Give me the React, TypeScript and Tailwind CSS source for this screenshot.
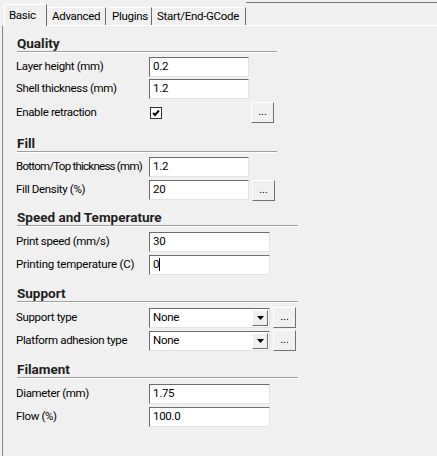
import React from 'react';

const font = { fontFamily: 'Roboto, "Noto Sans", sans-serif' };

function TextBox({ value, w, cursor }: { value: string; w: string; cursor?: boolean }) {
	return (
		<div
			className={`${w} h-[20px] bg-white border border-t-[#6d6d6d] border-l-[#6d6d6d] border-r-[#e3e3e3] border-b-[#e3e3e3] flex items-center pl-[3px] text-[11.5px] tracking-[-0.3px] text-black whitespace-nowrap`}
		>
			{value}
			{cursor && <span className="w-px h-[13px] bg-black" />}
		</div>
	);
}

function DotsButton() {
	return (
		<div className="w-[23px] h-[21px] bg-[#f0f0f0] border border-t-[#ffffff] border-l-[#ffffff] border-r-[#707070] border-b-[#707070] flex items-center justify-center text-[11px] leading-none text-black pb-[2px]">
			...
		</div>
	);
}

function Select({ value }: { value: string }) {
	return (
		<div className="w-[121px] h-[20px] bg-white border border-t-[#6d6d6d] border-l-[#6d6d6d] border-r-[#e3e3e3] border-b-[#e3e3e3] flex items-center text-[11.5px] tracking-[-0.3px] text-black">
			<span className="flex-1 pl-[3px]">{value}</span>
			<div className="w-[16px] h-[16px] mr-px bg-[#f0f0f0] border border-t-[#ffffff] border-l-[#ffffff] border-r-[#707070] border-b-[#707070] flex items-center justify-center">
				<svg width="7" height="4" viewBox="0 0 7 4">
					<path d="M0 0h7L3.5 4z" fill="#000" />
				</svg>
			</div>
		</div>
	);
}

function Checkbox() {
	return (
		<div className="w-[12px] h-[12px] bg-white border border-[#333] flex items-center justify-center ml-[1px]">
			<svg width="8" height="8" viewBox="0 0 8 8">
				<path d="M1 4l2 2L7 1.5" stroke="#000" strokeWidth="1.9" fill="none" />
			</svg>
		</div>
	);
}

function Section({ title, lineW, top, children }: { title: string; lineW: string; top: string; children: React.ReactNode }) {
	return (
		<div className={`${top} flex flex-col`}>
			<div className="pl-[14px] text-[13.5px] font-bold leading-[16px] text-[#1e1e1e] whitespace-nowrap">{title}</div>
			<div className={`${lineW} ml-[14px] border-t border-t-[#a0a0a0] border-b border-b-white`} />
			<div className="mt-[3px] flex flex-col">{children}</div>
		</div>
	);
}

function Row({
	label,
	h = 'h-[22px]',
	track = 'tracking-[-0.35px]',
	children,
}: {
	label: string;
	h?: string;
	track?: string;
	children: React.ReactNode;
}) {
	return (
		<div className={`${h} flex items-center`}>
			<div className={`w-[146px] pl-[13px] text-[11.5px] ${track} text-black whitespace-nowrap`}>{label}</div>
			<div className="flex items-center gap-[3px]">{children}</div>
		</div>
	);
}

export default function App() {
	return (
		<div className="w-[437px] h-[456px] bg-[#f0f0f0] overflow-hidden flex flex-col" style={font}>
			<div className="h-[25px] flex items-end pl-[4px] text-[11.5px] tracking-[-0.3px] text-black whitespace-nowrap">
				<div className="h-[22px] w-[43px] pl-[4px] pt-[2px] bg-[#f0f0f0] border border-b-0 border-t-white border-l-white border-r-[#696969] relative z-10 -mb-px">
					Basic
				</div>
				<div className="h-[18px] w-[59px] pl-[5px] border-t border-t-white border-r border-r-[#696969]">Advanced</div>
				<div className="h-[18px] w-[46px] pl-[6px] border-t border-t-white border-r border-r-[#696969]">Plugins</div>
				<div className="h-[18px] w-[94px] pl-[5px] border-t border-t-white border-r border-r-[#696969]">Start/End-GCode</div>
				<div className="flex-1 h-full pt-[2px]">
					<div className="border-t border-t-[#7a7a7a]" />
				</div>
			</div>
			<div className="flex-1 ml-[2px] border-l border-l-[#8a8a8a] border-t border-t-white flex flex-col">
				<Section title="Quality" lineW="w-[260px]" top="mt-[9px]">
					<Row label="Layer height (mm)">
						<TextBox value="0.2" w="w-[100px]" />
					</Row>
					<Row label="Shell thickness (mm)">
						<TextBox value="1.2" w="w-[100px]" />
					</Row>
					<Row label="Enable retraction" h="h-[25px]">
						<div className="w-[99px]">
							<Checkbox />
						</div>
						<DotsButton />
					</Row>
				</Section>
				<Section title="Fill" lineW="w-[260px]" top="mt-[10px]">
					<Row label="Bottom/Top thickness (mm)" track="tracking-[-0.75px]">
						<TextBox value="1.2" w="w-[100px]" />
					</Row>
					<Row label="Fill Density (%)" h="h-[24px]">
						<TextBox value="20" w="w-[100px]" />
						<DotsButton />
					</Row>
				</Section>
				<Section title="Speed and Temperature" lineW="w-[281px]" top="mt-[7px]">
					<Row label="Print speed (mm/s)" h="h-[23px]">
						<TextBox value="30" w="w-[121px]" />
					</Row>
					<Row label="Printing temperature (C)" h="h-[23px]" track="tracking-[-0.2px]">
						<TextBox value="0" w="w-[121px]" cursor />
					</Row>
				</Section>
				<Section title="Support" lineW="w-[281px]" top="mt-[9px]">
					<Row label="Support type" h="h-[23px]">
						<Select value="None" />
						<DotsButton />
					</Row>
					<Row label="Platform adhesion type" h="h-[23px]">
						<Select value="None" />
						<DotsButton />
					</Row>
				</Section>
				<Section title="Filament" lineW="w-[281px]" top="mt-[9px]">
					<Row label="Diameter (mm)" h="h-[23px]">
						<TextBox value="1.75" w="w-[121px]" />
					</Row>
					<Row label="Flow (%)" h="h-[23px]">
						<TextBox value="100.0" w="w-[121px]" />
					</Row>
				</Section>
			</div>
		</div>
	);
}
